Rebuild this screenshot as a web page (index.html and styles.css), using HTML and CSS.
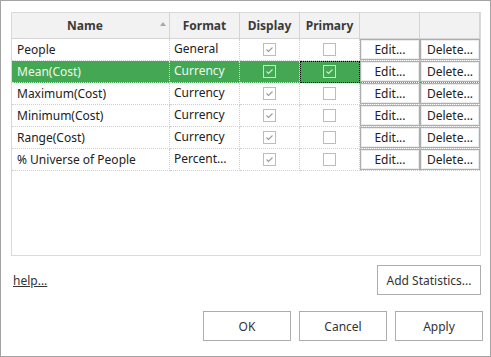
FILE: index.html
```html
<!DOCTYPE html>
<html lang="en">
  <head>
    <meta charset="UTF-8" />
    <title>Statistics</title>
    <link rel="stylesheet" href="styles.css">
  </head>
  <body>
    <div class="dialog">
      <div class="grid">
        <div class="row head">
          <div class="cell name-head">Name<span class="sort-arrow"></span></div>
          <div class="cell">Format</div>
          <div class="cell">Display</div>
          <div class="cell">Primary</div>
          <div class="cell"></div>
          <div class="cell"></div>
        </div>

        <div class="row">
          <div class="cell name">People</div>
          <div class="cell format">General</div>
          <div class="cell check"><span class="box"><svg viewBox="0 0 11 11"><path d="M2.5 5.5 L4.5 7.5 L8.5 3.5" /></svg></span></div>
          <div class="cell check"><span class="box"></span></div>
          <div class="cell action"><button class="cell-btn">Edit...</button></div>
          <div class="cell action"><button class="cell-btn">Delete...</button></div>
        </div>

        <div class="row selected">
          <div class="cell name">Mean(Cost)</div>
          <div class="cell format">Currency</div>
          <div class="cell check"><span class="box"><svg viewBox="0 0 11 11"><path d="M2.5 5.5 L4.5 7.5 L8.5 3.5" /></svg></span></div>
          <div class="cell check focused"><span class="box"><svg viewBox="0 0 11 11"><path d="M2.5 5.5 L4.5 7.5 L8.5 3.5" /></svg></span></div>
          <div class="cell action"><button class="cell-btn">Edit...</button></div>
          <div class="cell action"><button class="cell-btn">Delete...</button></div>
        </div>

        <div class="row">
          <div class="cell name">Maximum(Cost)</div>
          <div class="cell format">Currency</div>
          <div class="cell check"><span class="box"><svg viewBox="0 0 11 11"><path d="M2.5 5.5 L4.5 7.5 L8.5 3.5" /></svg></span></div>
          <div class="cell check"><span class="box"></span></div>
          <div class="cell action"><button class="cell-btn">Edit...</button></div>
          <div class="cell action"><button class="cell-btn">Delete...</button></div>
        </div>

        <div class="row">
          <div class="cell name">Minimum(Cost)</div>
          <div class="cell format">Currency</div>
          <div class="cell check"><span class="box"><svg viewBox="0 0 11 11"><path d="M2.5 5.5 L4.5 7.5 L8.5 3.5" /></svg></span></div>
          <div class="cell check"><span class="box"></span></div>
          <div class="cell action"><button class="cell-btn">Edit...</button></div>
          <div class="cell action"><button class="cell-btn">Delete...</button></div>
        </div>

        <div class="row">
          <div class="cell name">Range(Cost)</div>
          <div class="cell format">Currency</div>
          <div class="cell check"><span class="box"><svg viewBox="0 0 11 11"><path d="M2.5 5.5 L4.5 7.5 L8.5 3.5" /></svg></span></div>
          <div class="cell check"><span class="box"></span></div>
          <div class="cell action"><button class="cell-btn">Edit...</button></div>
          <div class="cell action"><button class="cell-btn">Delete...</button></div>
        </div>

        <div class="row">
          <div class="cell name">% Universe of People</div>
          <div class="cell format">Percentage</div>
          <div class="cell check"><span class="box"><svg viewBox="0 0 11 11"><path d="M2.5 5.5 L4.5 7.5 L8.5 3.5" /></svg></span></div>
          <div class="cell check"><span class="box"></span></div>
          <div class="cell action"><button class="cell-btn">Edit...</button></div>
          <div class="cell action"><button class="cell-btn">Delete...</button></div>
        </div>
      </div>

      <div class="extras">
        <a class="help" href="#">help...</a>
        <button class="btn add-btn">Add Statistics...</button>
      </div>

      <div class="actions">
        <button class="btn">OK</button>
        <button class="btn">Cancel</button>
        <button class="btn">Apply</button>
      </div>
    </div>
  </body>
</html>
```

FILE: styles.css
```css
* {
  box-sizing: border-box;
}
body {
  margin: 0;
  background-color: #fff;
  font-family: "Noto Sans", "Open Sans", sans-serif;
  font-size: 12px;
  color: #222;
}
.dialog {
  width: 491px;
  height: 357px;
  border: 1px solid #a3a3a3;
  padding: 11px 9px 0 10px;
}
.grid {
  height: 244px;
  border: 1px solid #d9d9d9;
}
.row {
  display: grid;
  grid-template-columns: 158px 70px 60px 60px 60px 60px;
}
.row .cell {
  height: 22px;
  border-bottom: 1px dotted #cfcfcf;
  white-space: nowrap;
  overflow: hidden;
}
.row.head .cell {
  position: relative;
  height: 26px;
  display: flex;
  align-items: center;
  justify-content: center;
  padding-bottom: 1px;
  background-color: #f2f2f2;
  border-right: 1px solid #d5d5d5;
  border-bottom: 1px solid #d5d5d5;
  font-weight: bold;
  color: #3a3a3a;
}
.row.head .name-head {
  padding-right: 11px;
}
.sort-arrow {
  position: absolute;
  right: 3px;
  top: 9px;
  width: 0;
  height: 0;
  border-left: 3.5px solid transparent;
  border-right: 3.5px solid transparent;
  border-bottom: 4px solid #a9a9a9;
}
.name,
.format,
.check {
  border-right: 1px dotted #cfcfcf;
  display: flex;
  align-items: center;
}
.name {
  padding: 0 4px 1px 5px;
}
.format {
  display: block;
  padding: 0 9px 0 4px;
  line-height: 20px;
  text-overflow: ellipsis;
}
.check {
  justify-content: center;
}
.box {
  width: 13px;
  height: 13px;
  border: 1px solid #bcbcbc;
  background-color: #fff;
  display: flex;
}
.box svg {
  width: 11px;
  height: 11px;
  fill: none;
  stroke: #9a9a9a;
  stroke-width: 1.1;
}
.cell-btn {
  width: 60px;
  height: 21px;
  margin: 0;
  padding: 0;
  border: 1px solid #adadad;
  box-shadow: inset 0 0 0 1px #ececec;
  background-color: #fff;
  font-family: inherit;
  font-size: 12px;
  color: #222;
}
.selected .cell {
  background-color: #44a753;
  color: #eef7ee;
  border-color: #c9e6cc;
}
.selected .action {
  background-color: #fff;
  border-bottom-color: #5aae66;
}
.selected .box {
  background-color: transparent;
  border-color: #cfe3d1;
}
.selected .box svg {
  stroke: #d8e8da;
}
.focused {
  outline: 1px dotted #000;
  outline-offset: -1px;
}
.extras {
  margin-top: 9px;
  display: flex;
  align-items: center;
  justify-content: space-between;
}
.help {
  margin-left: 2px;
  color: #333;
  text-decoration: underline;
}
.btn {
  width: 88px;
  height: 30px;
  margin: 0;
  padding: 0;
  border: 1px solid #adadad;
  background-color: #fff;
  font-family: inherit;
  font-size: 12px;
  color: #333;
}
.add-btn {
  width: 104px;
}
.actions {
  margin-top: 16px;
  margin-right: -2px;
  display: flex;
  justify-content: flex-end;
  gap: 8px;
}
```
